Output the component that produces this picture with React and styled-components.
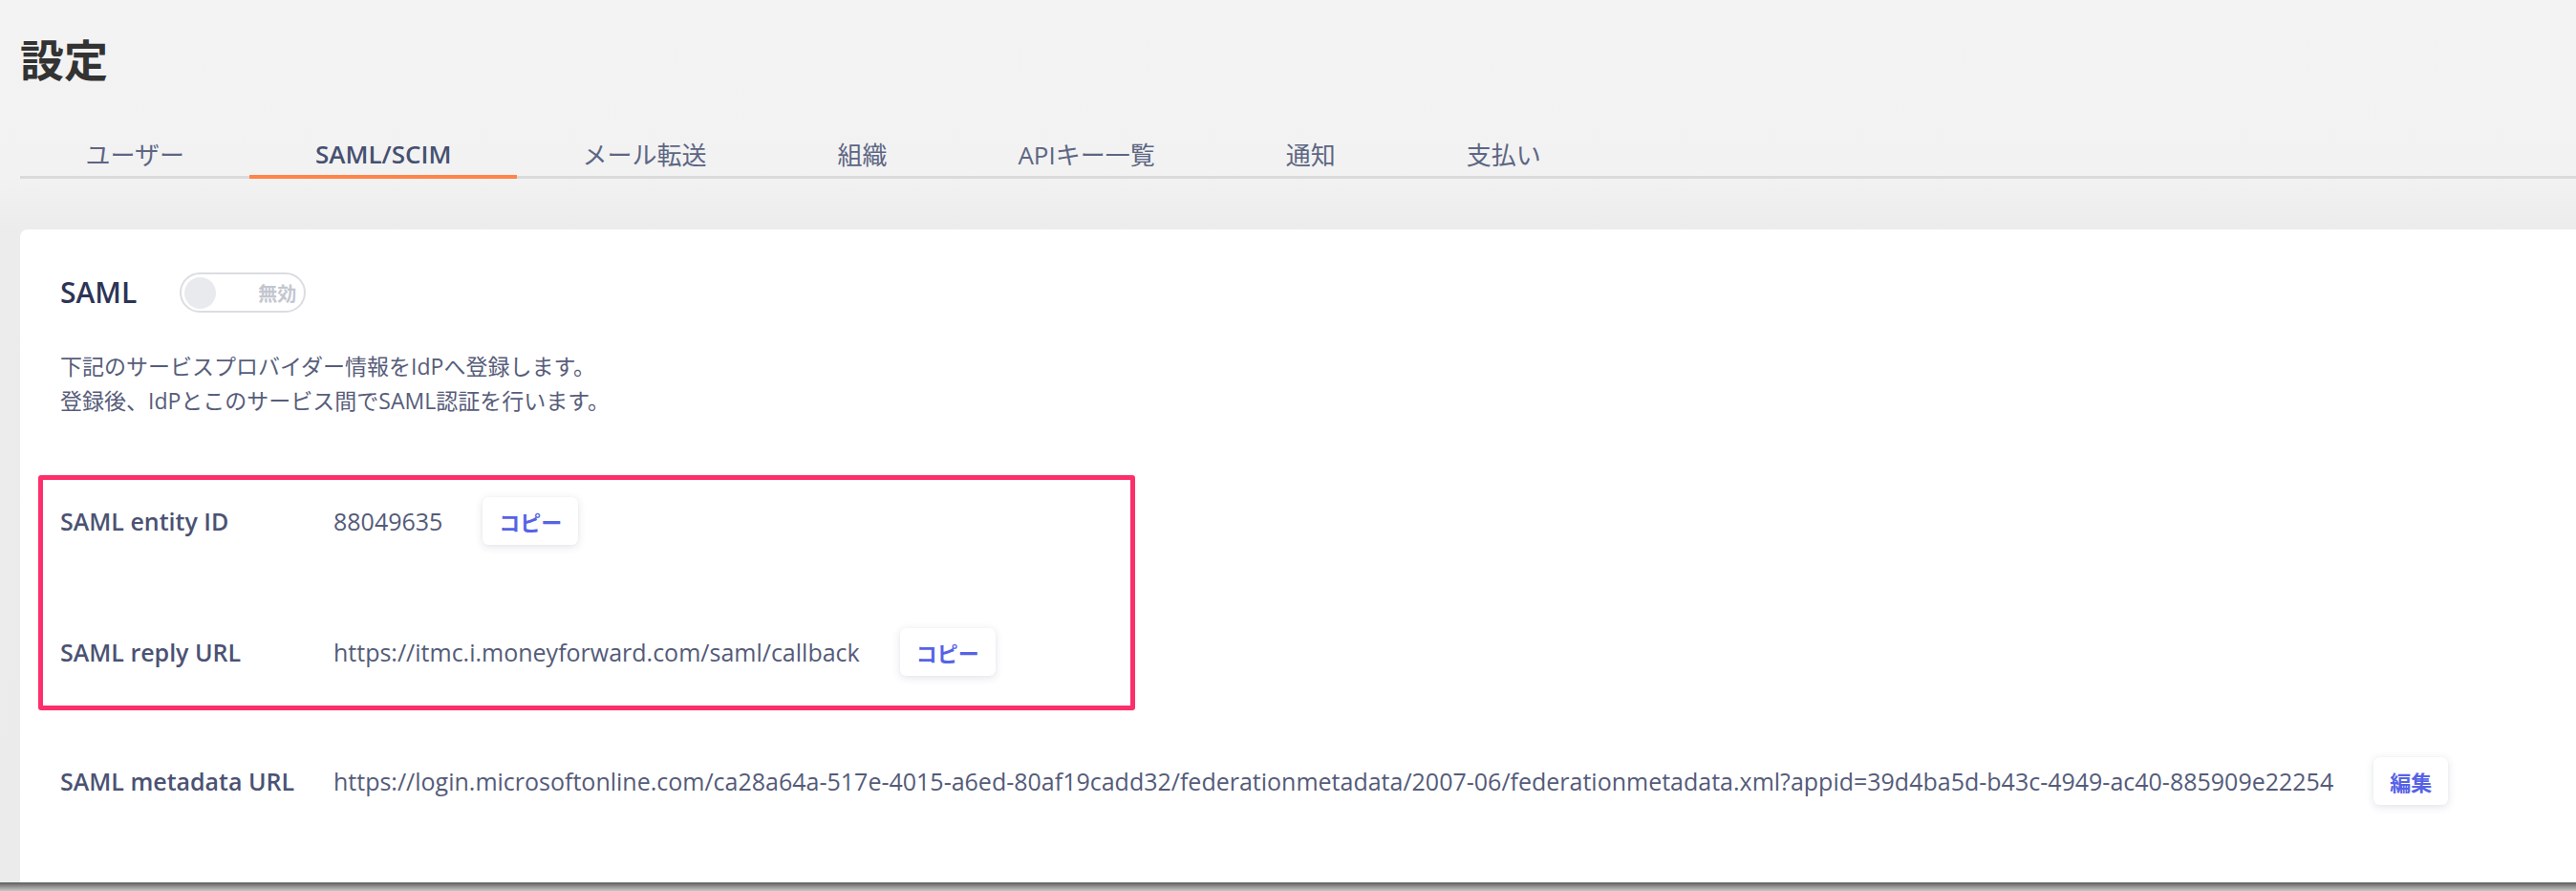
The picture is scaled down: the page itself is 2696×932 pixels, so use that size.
import React from "react";
import styled, { createGlobalStyle } from "styled-components";

const Global = createGlobalStyle`
  html, body { margin: 0; padding: 0; }
  body {
    width: 2696px;
    height: 932px;
    overflow: hidden;
    background: #ebebeb;
    font-family: "Open Sans", "Noto Sans CJK JP", sans-serif;
  }
  * { box-sizing: border-box; }
`;

const Page = styled.div`
  height: 932px;
  display: flex;
  flex-direction: column;
  background: linear-gradient(#f3f3f3 0, #f2f2f2 185px, #ececec 240px, #ebebeb 100%);
`;

const Main = styled.main`
  flex: 1;
  min-height: 0;
  display: flex;
  flex-direction: column;
  padding: 28px 0 0 21px;
  overflow: hidden;
`;

const Title = styled.h1`
  margin: 0;
  font-family: "Noto Sans CJK JP", sans-serif;
  font-size: 46px;
  line-height: 64px;
  font-weight: 700;
  color: #333333;
`;

const TabBar = styled.nav`
  display: flex;
  margin-top: 47px;
  border-bottom: 3px solid #dadada;
`;

const Tab = styled.div`
  height: 48px;
  padding: 0 68.5px;
  margin-bottom: -3px;
  display: flex;
  align-items: center;
  white-space: nowrap;
  font-size: 26px;
  font-weight: ${(p) => (p.$active ? 600 : 400)};
  color: ${(p) => (p.$active ? "#465070" : "#5d6683")};
  border-bottom: 4px solid ${(p) => (p.$active ? "#ff8448" : "transparent")};
`;

const Card = styled.section`
  flex: 1;
  margin-top: 53px;
  background: #ffffff;
  border-radius: 8px 0 0 0;
  padding: 45px 0 0 42px;
`;

const Header = styled.div`
  display: flex;
  align-items: center;
  gap: 45px;
  height: 42px;
`;

const Heading = styled.h2`
  margin: 0;
  font-size: 30px;
  font-weight: 600;
  color: #2d3457;
  line-height: 42px;
`;

const Toggle = styled.div`
  width: 132px;
  height: 42px;
  border: 2px solid #dcdde2;
  border-radius: 21px;
  display: flex;
  align-items: center;
  justify-content: space-between;
  padding: 0 8px 0 3px;
`;

const Knob = styled.span`
  width: 33px;
  height: 33px;
  border-radius: 50%;
  background: #e9eaee;
`;

const ToggleLabel = styled.span`
  font-size: 20px;
  font-weight: 700;
  color: #c3c6cf;
`;

const Description = styled.p`
  margin: 38px 0 0;
  font-size: 23px;
  line-height: 36px;
  color: #575d7a;
`;

const Highlight = styled.div`
  margin: 60px 0 0 -23px;
  width: 1148px;
  border: 5px solid #fc2f6b;
  border-radius: 3px;
  padding: 18px 0 31px 18px;
  display: flex;
  flex-direction: column;
  gap: 87px;
`;

const Row = styled.div`
  display: flex;
  align-items: center;
  height: 50px;
  margin-top: ${(p) => p.$offset || 0}px;
`;

const Label = styled.div`
  width: 286px;
  flex: none;
  font-size: 25px;
  font-weight: 600;
  color: #4b5273;
`;

const Value = styled.div`
  font-size: 25px;
  color: #545b79;
  white-space: nowrap;
  margin-right: 42px;
`;

const SmallButton = styled.button`
  height: 50px;
  padding: 0 17px;
  border: none;
  border-radius: 6px;
  background: #ffffff;
  box-shadow: 0 2px 8px rgba(30, 40, 80, 0.13), 0 0 1px rgba(30, 40, 80, 0.08);
  font-family: "Noto Sans CJK JP", sans-serif;
  font-size: 22px;
  font-weight: 700;
  color: #5663e6;
  cursor: pointer;
`;

const BottomEdge = styled.div`
  height: 9px;
  flex: none;
  background: linear-gradient(#5c5c5c, #8e8e8e 45%, #c8c8c8);
`;

const tabs = ["ユーザー", "SAML/SCIM", "メール転送", "組織", "APIキー一覧", "通知", "支払い"];

const metadataUrl =
  "https://login.microsoftonline.com/ca28a64a-517e-4015-a6ed-80af19cadd32/federationmetadata/2007-06/federationmetadata.xml?appid=39d4ba5d-b43c-4949-ac40-885909e22254";

export default function App() {
  return (
    <>
      <Global />
      <Page>
        <Main>
          <Title>設定</Title>
          <TabBar>
            {tabs.map((t) => (
              <Tab key={t} $active={t === "SAML/SCIM"}>
                {t}
              </Tab>
            ))}
          </TabBar>
          <Card>
            <Header>
              <Heading>SAML</Heading>
              <Toggle>
                <Knob />
                <ToggleLabel>無効</ToggleLabel>
              </Toggle>
            </Header>
            <Description>
              下記のサービスプロバイダー情報をIdPへ登録します。
              <br />
              登録後、IdPとこのサービス間でSAML認証を行います。
            </Description>
            <Highlight>
              <Row>
                <Label>SAML entity ID</Label>
                <Value>88049635</Value>
                <SmallButton>コピー</SmallButton>
              </Row>
              <Row>
                <Label>SAML reply URL</Label>
                <Value>https://itmc.i.moneyforward.com/saml/callback</Value>
                <SmallButton>コピー</SmallButton>
              </Row>
            </Highlight>
            <Row $offset={49}>
              <Label>SAML metadata URL</Label>
              <Value>{metadataUrl}</Value>
              <SmallButton>編集</SmallButton>
            </Row>
          </Card>
        </Main>
        <BottomEdge />
      </Page>
    </>
  );
}
